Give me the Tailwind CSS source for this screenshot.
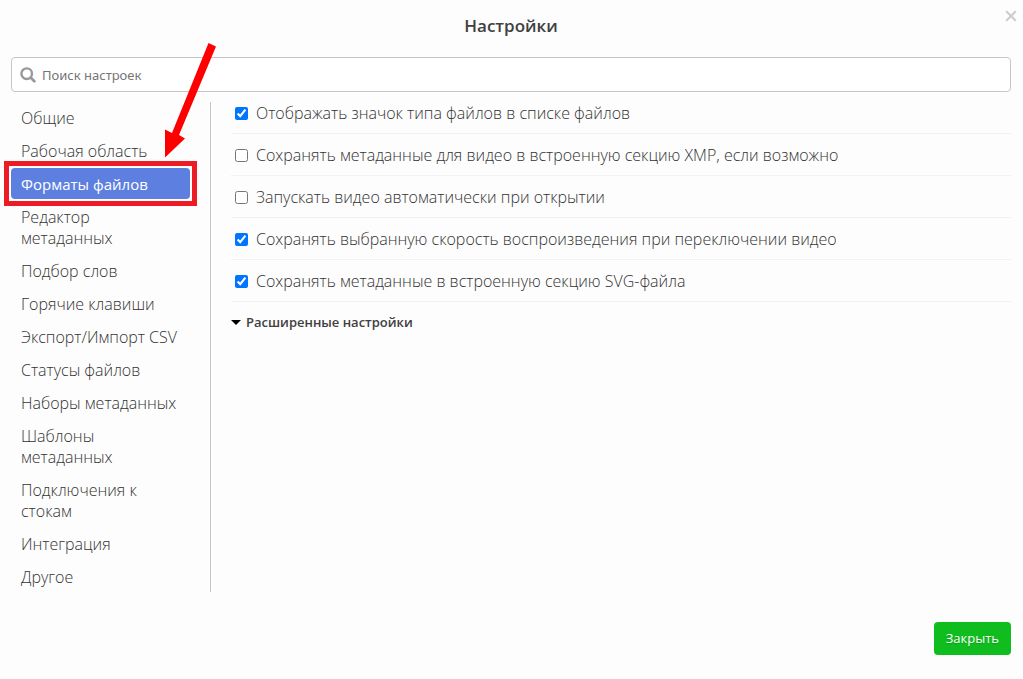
<!DOCTYPE html>
<html lang="ru">
<head>
<meta charset="utf-8">
<meta name="viewport" content="width=device-width, initial-scale=1">
<title>Настройки</title>
<script src="https://cdn.jsdelivr.net/npm/@tailwindcss/browser@4"></script>
</head>
<body class="relative flex min-h-screen flex-col bg-[#fdfdfd] pr-3 pl-[11px] font-['Open_Sans','Noto_Sans',sans-serif] text-[#404040]">
<header class="flex h-[57px] shrink-0 items-start justify-center pt-3.5">
  <h1 class="text-[17px] leading-6 font-semibold">Настройки</h1>
  <button type="button" aria-label="Закрыть окно" class="absolute top-2 right-1 p-0.5 text-[#cbcbcb]">
    <svg class="size-3" viewBox="0 0 12 12" fill="none" stroke="currentColor" stroke-width="2"><path d="M1.2 1.2l9.600 9.600M10.800 1.200l-9.600 9.600"/></svg>
  </button>
</header>

<label class="flex h-[35px] shrink-0 items-center gap-1.5 rounded border border-[#c6c6c6] bg-white px-2">
  <svg class="size-4 shrink-0 text-[#999]" viewBox="0 0 16 16" fill="none" stroke="currentColor"><circle cx="6.7" cy="6.7" r="5.3" stroke-width="2.4"/><path d="M10.6 10.6l3.7 3.7" stroke-width="2.8" stroke-linecap="round"/></svg>
  <input type="text" aria-label="Поиск настроек" placeholder="Поиск настроек" class="min-w-0 flex-1 font-['Noto_Sans',sans-serif] text-[13px] leading-5 outline-none placeholder:text-[#757575]">
</label>

<main class="mt-2.5 flex">
  <nav class="flex w-[200px] shrink-0 flex-col gap-0.5 border-r border-[#c6c6c6] pr-5 text-[16px] leading-[21px] font-light text-[#333]">
    <a href="#" class="rounded px-2.5 pt-1.5 pb-1">Общие</a>
    <a href="#" class="rounded px-2.5 pt-1.5 pb-1">Рабочая область</a>
    <a href="#" aria-current="page" class="relative rounded bg-[#5d80e0] px-2.5 pt-1.5 pb-1 text-[15px] font-medium text-white">Форматы файлов
      <span class="pointer-events-none absolute -inset-[7px] border-5 border-[#ed1c24]"></span>
      <svg class="pointer-events-none absolute -top-[125px] left-[153px] h-[115px] w-[53px]" viewBox="0 0 53 115" fill="#fe0000"><path d="M44.500 0L52 3.500L15 92L21 95.500L1 114.500V86.500L8 90Z"/></svg>
    </a>
    <a href="#" class="rounded px-2.5 pt-1.5 pb-1">Редактор<br>метаданных</a>
    <a href="#" class="rounded px-2.5 pt-1.5 pb-1">Подбор слов</a>
    <a href="#" class="rounded px-2.5 pt-1.5 pb-1">Горячие клавиши</a>
    <a href="#" class="rounded px-2.5 pt-1.5 pb-1">Экспорт/Импорт CSV</a>
    <a href="#" class="rounded px-2.5 pt-1.5 pb-1">Статусы файлов</a>
    <a href="#" class="rounded px-2.5 pt-1.5 pb-1">Наборы метаданных</a>
    <a href="#" class="rounded px-2.5 pt-1.5 pb-1">Шаблоны<br>метаданных</a>
    <a href="#" class="rounded px-2.5 pt-1.5 pb-1">Подключения к<br>стокам</a>
    <a href="#" class="rounded px-2.5 pt-1.5 pb-1">Интеграция</a>
    <a href="#" class="rounded px-2.5 pt-1.5 pb-1">Другое</a>
  </nav>

  <section class="ml-5 min-w-0 flex-1 text-[16px] leading-[21px] font-light text-[#333]">
    <label class="flex h-8 items-center gap-2 border-b border-[#f2f2f2] pb-2 pl-1"><input type="checkbox" checked class="size-[13px] shrink-0 accent-[#0075ff]">Отображать значок типа файлов в списке файлов</label>
    <label class="flex h-[42px] items-center gap-2 border-b border-[#f2f2f2] pt-0.5 pl-1"><input type="checkbox" class="size-[13px] shrink-0">Сохранять метаданные для видео в встроенную секцию XMP, если возможно</label>
    <label class="flex h-[42px] items-center gap-2 border-b border-[#f2f2f2] pt-0.5 pl-1"><input type="checkbox" class="size-[13px] shrink-0">Запускать видео автоматически при открытии</label>
    <label class="flex h-[42px] items-center gap-2 border-b border-[#f2f2f2] pt-0.5 pl-1"><input type="checkbox" checked class="size-[13px] shrink-0 accent-[#0075ff]">Сохранять выбранную скорость воспроизведения при переключении видео</label>
    <label class="flex h-[42px] items-center gap-2 border-b border-[#f2f2f2] pt-0.5 pl-1"><input type="checkbox" checked class="size-[13px] shrink-0 accent-[#0075ff]">Сохранять метаданные в встроенную секцию SVG-файла</label>
    <button type="button" class="mt-2.5 flex items-center gap-[5px] text-[13px] leading-5 font-semibold text-[#404040]">
      <svg class="h-[5px] w-2.5" viewBox="0 0 10 5" fill="#000"><path d="M0 0h10L5 5z"/></svg>Расширенные настройки
    </button>
  </section>
</main>

<footer class="mt-[30px] flex justify-end pb-6">
  <button type="button" class="h-[33px] rounded bg-[#0fbe1e] px-3 text-[13px] font-medium text-white text-shadow-xs">Закрыть</button>
</footer>
</body>
</html>
